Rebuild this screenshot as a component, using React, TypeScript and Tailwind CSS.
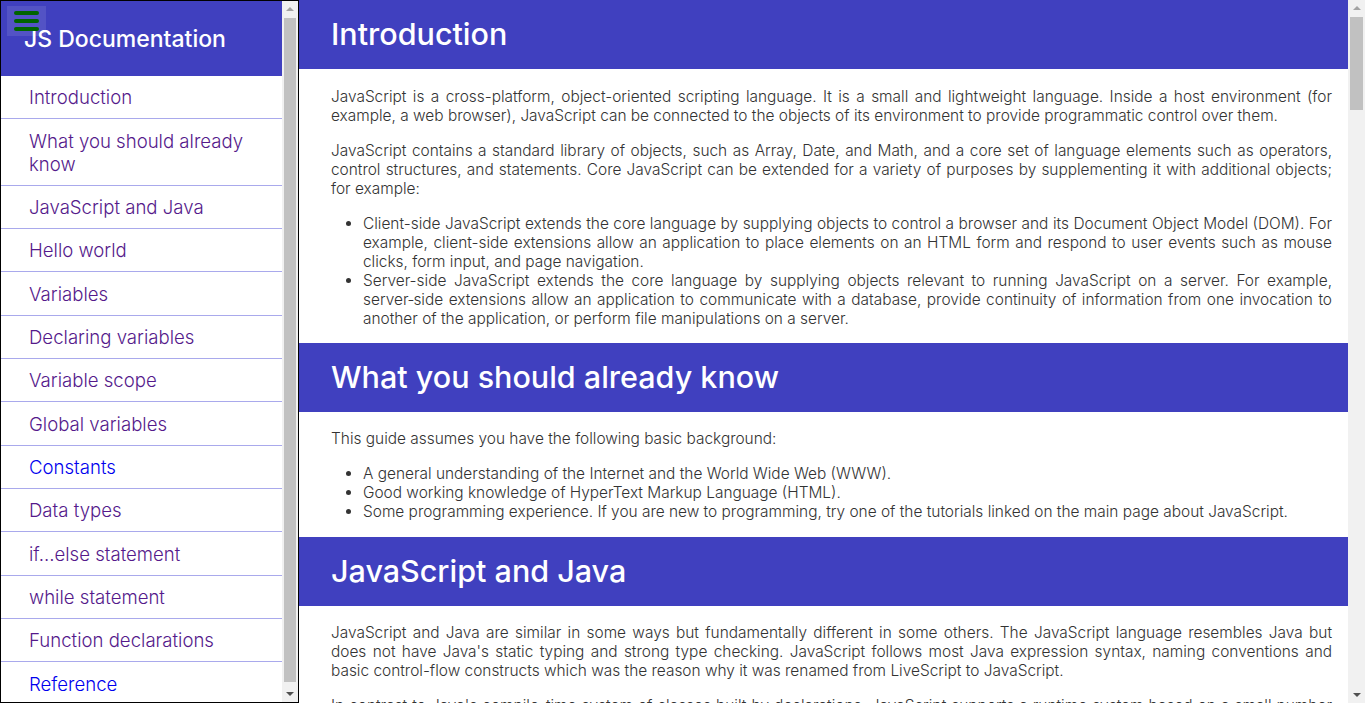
import React from "react";

type NavLink = { label: string; visited: boolean };

const links: NavLink[] = [
  { label: "Introduction", visited: true },
  { label: "What you should already know", visited: true },
  { label: "JavaScript and Java", visited: true },
  { label: "Hello world", visited: true },
  { label: "Variables", visited: true },
  { label: "Declaring variables", visited: true },
  { label: "Variable scope", visited: true },
  { label: "Global variables", visited: true },
  { label: "Constants", visited: false },
  { label: "Data types", visited: true },
  { label: "if...else statement", visited: true },
  { label: "while statement", visited: true },
  { label: "Function declarations", visited: true },
  { label: "Reference", visited: false },
];

// Classic scrollbar look (headless browser hides the real ones)
function FakeScrollbar({ className, thumbClass }: { className: string; thumbClass: string }) {
  return (
    <div className={`flex shrink-0 flex-col bg-[#f1f1f1] ${className}`}>
      <div className="flex h-[16px] shrink-0 items-center justify-center">
        <span className="h-0 w-0 border-x-[4px] border-b-[4px] border-x-transparent border-b-[#a3a3a3]" />
      </div>
      <div className="flex flex-1 flex-col px-[2px]">
        <div className={`bg-[#c1c1c1] ${thumbClass}`} />
      </div>
      <div className="flex h-[16px] shrink-0 items-center justify-center">
        <span className="h-0 w-0 border-x-[4px] border-t-[4px] border-x-transparent border-t-[#505050]" />
      </div>
    </div>
  );
}

function SectionHeader({ title }: { title: string }) {
  return (
    <header className="flex h-[69px] items-center bg-[#4040bf] px-8">
      <h2 className="text-[30.5px] font-medium leading-none text-white">{title}</h2>
    </header>
  );
}

export default function App() {
  return (
    <div
      className="flex h-screen w-full overflow-hidden bg-white text-[#333]"
      style={{ fontFamily: "Inter, 'Noto Sans', sans-serif" }}
    >
      {/* Side navigation */}
      <nav className="relative flex w-[299px] shrink-0 border border-black">
        <button
          aria-label="Toggle menu"
          className="absolute left-[6px] top-[5px] z-10 flex h-[30px] w-[39px] flex-col items-center justify-center gap-[4px] bg-white/10"
        >
          <span className="h-[4px] w-[25px] rounded-full bg-[#006400]" />
          <span className="h-[4px] w-[25px] rounded-full bg-[#006400]" />
          <span className="h-[4px] w-[25px] rounded-full bg-[#006400]" />
        </button>
        <div className="min-w-0 flex-1 overflow-hidden">
          <header className="flex h-[75px] items-center bg-[#4040bf] pl-[23px] pt-[2px]">
            <h1 className="text-[23px] font-medium text-white">JS Documentation</h1>
          </header>
          <ul>
            {links.map((l) => (
              <li key={l.label} className="border-b border-[#a9a9ec]">
                <a
                  href="#"
                  className={`block pb-[9px] pl-[28px] pr-4 pt-[10.33px] text-[18.6px] font-light leading-[23px] ${
                    l.visited ? "text-[#551a8b]" : "text-[#0000ee]"
                  }`}
                >
                  {l.label}
                </a>
              </li>
            ))}
          </ul>
        </div>
        <FakeScrollbar className="w-[16px]" thumbClass="mt-px flex-1 mb-[4px]" />
      </nav>

      {/* Main content */}
      <main className="flex min-w-0 flex-1">
        <div className="min-w-0 flex-1 overflow-hidden text-[15.43px] font-light leading-[19px]">
          <section>
            <SectionHeader title="Introduction" />
            <div className="pl-8 pr-4 pt-[2px] text-justify">
              <p className="my-4">
                JavaScript is a cross-platform, object-oriented scripting language. It is a small and
                lightweight language. Inside a host environment (for example, a web browser),
                JavaScript can be connected to the objects of its environment to provide programmatic
                control over them.
              </p>
              <p className="my-4">
                JavaScript contains a standard library of objects, such as Array, Date, and Math, and a
                core set of language elements such as operators, control structures, and statements.
                Core JavaScript can be extended for a variety of purposes by supplementing it with
                additional objects; for example:
              </p>
              <ul className="mb-[15px] mt-4 list-disc pl-8">
                <li>
                  Client-side JavaScript extends the core language by supplying objects to control a
                  browser and its Document Object Model (DOM). For example, client-side extensions allow
                  an application to place elements on an HTML form and respond to user events such as
                  mouse clicks, form input, and page navigation.
                </li>
                <li>
                  Server-side JavaScript extends the core language by supplying objects relevant to
                  running JavaScript on a server. For example, server&#8209;side extensions allow an
                  application to communicate with a database, provide continuity of information from one
                  invocation to another of the application, or perform file manipulations on a server.
                </li>
              </ul>
            </div>
          </section>

          <section>
            <SectionHeader title="What you should already know" />
            <div className="pl-8 pr-4 pt-px text-justify">
              <p className="my-4">This guide assumes you have the following basic background:</p>
              <ul className="mt-4 mb-4 list-disc pl-8">
                <li>A general understanding of the Internet and the World Wide Web (WWW).</li>
                <li>Good working knowledge of HyperText Markup Language (HTML).</li>
                <li>
                  Some programming experience. If you are new to programming, try one of the tutorials
                  linked on the main page about JavaScript.
                </li>
              </ul>
            </div>
          </section>

          <section>
            <SectionHeader title="JavaScript and Java" />
            <div className="pl-8 pr-4 pt-px text-justify">
              <p className="my-4">
                JavaScript and Java are similar in some ways but fundamentally different in some
                others. The JavaScript language resembles Java but does not have Java's static typing
                and strong type checking. JavaScript follows most Java expression syntax, naming
                conventions and basic control-flow constructs which was the reason why it was renamed
                from LiveScript to JavaScript.
              </p>
              <p className="my-4">
                In contrast to Java's compile-time system of classes built by declarations, JavaScript
                supports a runtime system based on a small number of data types representing numeric,
                Boolean, and string values. JavaScript has a prototype-based object model instead of
                the more common class-based object model.
              </p>
            </div>
          </section>
        </div>
        <FakeScrollbar className="w-[17px]" thumbClass="mt-px h-[93px]" />
      </main>
    </div>
  );
}
